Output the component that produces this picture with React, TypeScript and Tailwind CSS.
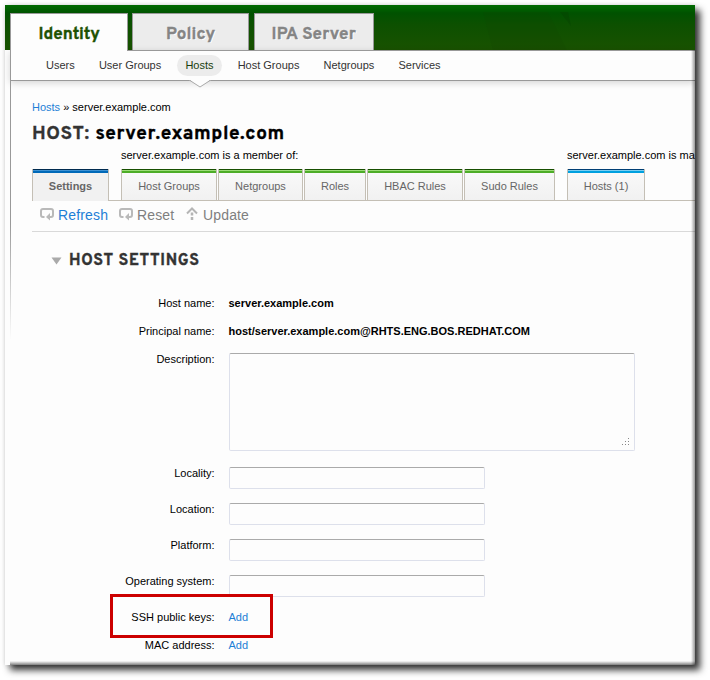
import React from "react";

const headingFont = "font-['Overpass','Noto_Sans',sans-serif] [-webkit-text-stroke:0.35px_currentColor]";

type MainTab = { label: string; box: string; text: string };

const mainTabs: MainTab[] = [
  { label: "Identity", box: "w-[118px] bg-[#fdfdfd] text-[#1d5203] z-10 h-[38px]", text: "w-[61px] tracking-[0px]" },
  { label: "Policy", box: "ml-1 w-[117px] bg-[#ececec] text-[#858585] h-[37px]", text: "w-[49px] tracking-[0.1px]" },
  { label: "IPA Server", box: "ml-[5px] w-[120px] bg-[#ececec] text-[#858585] h-[37px]", text: "w-[85px] tracking-[0.2px]" },
];

const subTabs = ["Users", "User Groups", "Hosts", "Host Groups", "Netgroups", "Services"];

const facets = [
  { label: "Host Groups", width: "w-[96px]" },
  { label: "Netgroups", width: "w-[85px]" },
  { label: "Roles", width: "w-[62px]" },
  { label: "HBAC Rules", width: "w-[96px]" },
  { label: "Sudo Rules", width: "w-[91px]" },
];

const inputs = ["Locality:", "Location:", "Platform:", "Operating system:"];

function Facet({ label, width, bar, active }: { label: string; width: string; bar: string; active?: boolean }) {
  return (
    <div
      className={`flex h-8 shrink-0 flex-col border-x border-[#c4bfb5] ${width} ${
        active ? "bg-[#f1f1f1] font-bold" : "border-b bg-linear-to-b from-[#fafafa] to-[#f1f1f1]"
      }`}
    >
      <div className={`h-1 shrink-0 ${bar}`} />
      <div className="pt-[7px] text-center leading-[13px] text-[#666]">{label}</div>
    </div>
  );
}

const greenBar = "bg-[linear-gradient(to_bottom,#174f00_25%,#9bdc78_25%,#9bdc78_50%,#4dad27_50%)]";
const blueBar = "bg-[linear-gradient(to_bottom,#002b50_25%,#3d91d2_25%,#3d91d2_50%,#0069b8_50%)]";
const cyanBar = "bg-[linear-gradient(to_bottom,#003f75_25%,#79cdf1_25%,#79cdf1_50%,#00a0df_50%)]";

function LoopIcon() {
  return (
    <svg width="15" height="13" viewBox="0 0 15 13" fill="none" stroke="#b9b9b9" strokeWidth="2">
      <path d="M4.500 9H3a2 2 0 0 1-2-2V3a2 2 0 0 1 2-2h8a2 2 0 0 1 2 2v4a2 2 0 0 1-2 2H8" />
      <path d="M10 5v7.500L6 9Z" fill="#b9b9b9" stroke="none" />
    </svg>
  );
}

function UpdateIcon() {
  return (
    <svg width="13" height="13" viewBox="0 0 13 13" fill="none" stroke="#b5b5b5" strokeWidth="2">
      <path d="M1 6.500 6 1.500 11 6.500" />
      <path d="M6 5.500v3M6 10v3" strokeWidth="2.500" />
    </svg>
  );
}

function Label({ children }: { children: React.ReactNode }) {
  return <div className="w-[182.5px] shrink-0 text-right leading-[13px]">{children}</div>;
}

export default function App() {
  return (
    <div className="h-[680px] w-[710px] overflow-hidden bg-white pt-[5px] pl-[5px] font-['Liberation_Sans',Arial,sans-serif] text-[11px] text-black">
      <div className="relative h-[660px] w-[690px] bg-[#fdfdfd] shadow-[5px_5px_7px_rgba(0,0,0,0.8),0_0_5px_rgba(0,0,0,0.12)]">
        <div className="flex h-full w-full flex-col overflow-hidden">
          <header className="relative h-[45px] shrink-0 bg-[linear-gradient(to_bottom,#006a00_0,#006200_3px,#005200_8px,#0d5000_20px,#195200_45px)] pt-2 pl-[5px]">
            <svg className="absolute top-0 right-0" width="315" height="45" viewBox="0 0 315 45">
              <path d="M103 7 113 45H187L168 7Z" fill="#174400" opacity=".15" />
              <path d="M180 7 191 21 188 7Z" fill="#073b00" opacity=".3" />
            </svg>
            <nav className={`relative flex text-[17px] font-bold ${headingFont}`}>
              {mainTabs.map((tab) => (
                <div key={tab.label} className={`flex justify-center border border-b-0 border-[#999] ${tab.box}`}>
                  <span className={`mt-[9px] h-6 whitespace-nowrap leading-6 [text-shadow:1px_1px_0_#fff] ${tab.text}`}>{tab.label}</span>
                </div>
              ))}
            </nav>
          </header>

          <div className="flex min-h-0 flex-1 flex-col pl-[5px]">
            <nav className="relative flex h-[31px] shrink-0 border-y border-[#999] shadow-[0_2px_7px_rgba(0,0,0,0.16)]">
              <div className="flex gap-[8.15px] pt-1 pl-7">
                {subTabs.map((tab) => (
                  <span
                    key={tab}
                    className={`h-[21px] rounded-full px-2 leading-[21px] ${tab === "Hosts" ? "bg-[#ececec] text-[#193e0c]" : "text-[#333]"}`}
                  >
                    {tab}
                  </span>
                ))}
              </div>
              <svg className="absolute top-[28px] left-[179px]" width="22" height="9" viewBox="0 0 22 9">
                <path d="M0 0H22V1H21L11 8.500 1 1H0Z" fill="#fdfdfd" />
                <path d="M0 1.500H1L11 8 21 1.500H22" fill="none" stroke="#aaa" />
              </svg>
            </nav>

            <main className="flex min-h-0 flex-1 flex-col pl-[22px]">
              <div className="mt-5 leading-[13px]">
                <span className="text-[#1e7fd6]">Hosts</span> » server.example.com
              </div>
              <h1 className={`mt-2 h-6 text-[19px] leading-6 font-bold tracking-[0.6px] whitespace-nowrap ${headingFont}`}>
                <span className="text-[#333]">HOST:</span> <span className="ml-[0.5px]">server.example.com</span>
              </h1>

              <div className="mt-[3px] flex h-[52px] shrink-0">
                <div className="mt-5">
                  <Facet label="Settings" width="w-[77px]" bar={blueBar} active />
                </div>
                <div className="w-3 shrink-0 border-b border-[#c4bfb5]" />
                <div className="flex w-[434px] shrink-0 flex-col">
                  <div className="h-5 leading-[13px]">server.example.com is a member of:</div>
                  <div className="flex gap-px bg-[linear-gradient(#c4bfb5,#c4bfb5)] bg-[length:100%_1px] bg-bottom bg-no-repeat">
                    {facets.map((f) => (
                      <Facet key={f.label} label={f.label} width={f.width} bar={greenBar} />
                    ))}
                  </div>
                </div>
                <div className="w-3 shrink-0 border-b border-[#c4bfb5]" />
                <div className="flex min-w-0 flex-1 flex-col border-b border-[#c4bfb5]">
                  <div className="h-5 shrink-0 leading-[13px] whitespace-nowrap">server.example.com is ma</div>
                  <Facet label="Hosts (1)" width="w-[78px]" bar={cyanBar} />
                </div>
              </div>

              <div className="flex h-[31px] shrink-0 border-b border-[#d9d9d9] pt-[5px] pl-2 text-[14px] leading-[18px] text-[#7f7f7f]">
                <div className="flex w-[79px] gap-[3px] tracking-[0.15px] text-[#1e7fd6]"><span className="pt-[2px]"><LoopIcon /></span>Refresh</div>
                <div className="flex w-[67px] gap-[3px] tracking-[0.15px]"><span className="pt-[2px]"><LoopIcon /></span>Reset</div>
                <div className="flex gap-1 tracking-[0.15px]"><span className="pt-px"><UpdateIcon /></span>Update</div>
              </div>

              <div className="mt-[17px] flex h-6 shrink-0 items-center pl-[19px]">
                <svg width="11" height="8" viewBox="0 0 11 8"><path d="M.5 .5H10.500L5.500 7.500Z" fill="#aaa" /></svg>
                <h2 className={`ml-[7px] text-[16px] leading-6 font-bold tracking-[0.65px] text-[#333] ${headingFont}`}>HOST SETTINGS</h2>
              </div>

              <div className="mt-6 flex flex-col">
                <div className="flex h-7 gap-[14px]"><Label>Host name:</Label><strong className="leading-[13px]">server.example.com</strong></div>
                <div className="flex h-7 gap-[14px]"><Label>Principal name:</Label><strong className="leading-[13px]">host/server.example.com@RHTS.ENG.BOS.REDHAT.COM</strong></div>
                <div className="flex h-[114px] gap-[14.5px]">
                  <Label>Description:</Label>
                  <div className="flex h-[98px] w-[406px] items-end justify-end rounded-[2px] border border-[#dde0eb] border-t-[#aaa] p-1">
                    <svg width="9" height="9" viewBox="0 0 9 9" fill="#888">
                      <path d="M7 1h1v1H7zM4 4h1v1H4zM7 4h1v1H7zM1 7h1v1H1zM4 7h1v1H4zM7 7h1v1H7z" />
                    </svg>
                  </div>
                </div>
                {inputs.map((label) => (
                  <div key={label} className="flex h-9 gap-[14.5px]">
                    <Label>{label}</Label>
                    <div className="h-[22px] w-[256px] rounded-[2px] border border-[#dde0eb] border-t-[#aaa]" />
                  </div>
                ))}
                {["SSH public keys:", "MAC address:"].map((label) => (
                  <div key={label} className="flex h-7 gap-[14px] leading-[13px]">
                    <Label>{label}</Label>
                    <span className="text-[#1e7fd6]">Add</span>
                  </div>
                ))}
              </div>
            </main>
          </div>
        </div>
        <div className="absolute top-[45px] left-[5px] h-[290px] w-px bg-linear-to-b from-[#999] from-60% to-transparent" />
        <div className="absolute top-[589px] left-[105px] h-[44px] w-[163px] border-3 border-[#c00]" />
        <div className="absolute right-0 bottom-0 h-[615px] w-[4px] bg-linear-to-r from-transparent to-black/40" />
        <div className="absolute bottom-0 left-[5px] h-[4px] w-[685px] bg-linear-to-b from-transparent to-black/50" />
      </div>
    </div>
  );
}
